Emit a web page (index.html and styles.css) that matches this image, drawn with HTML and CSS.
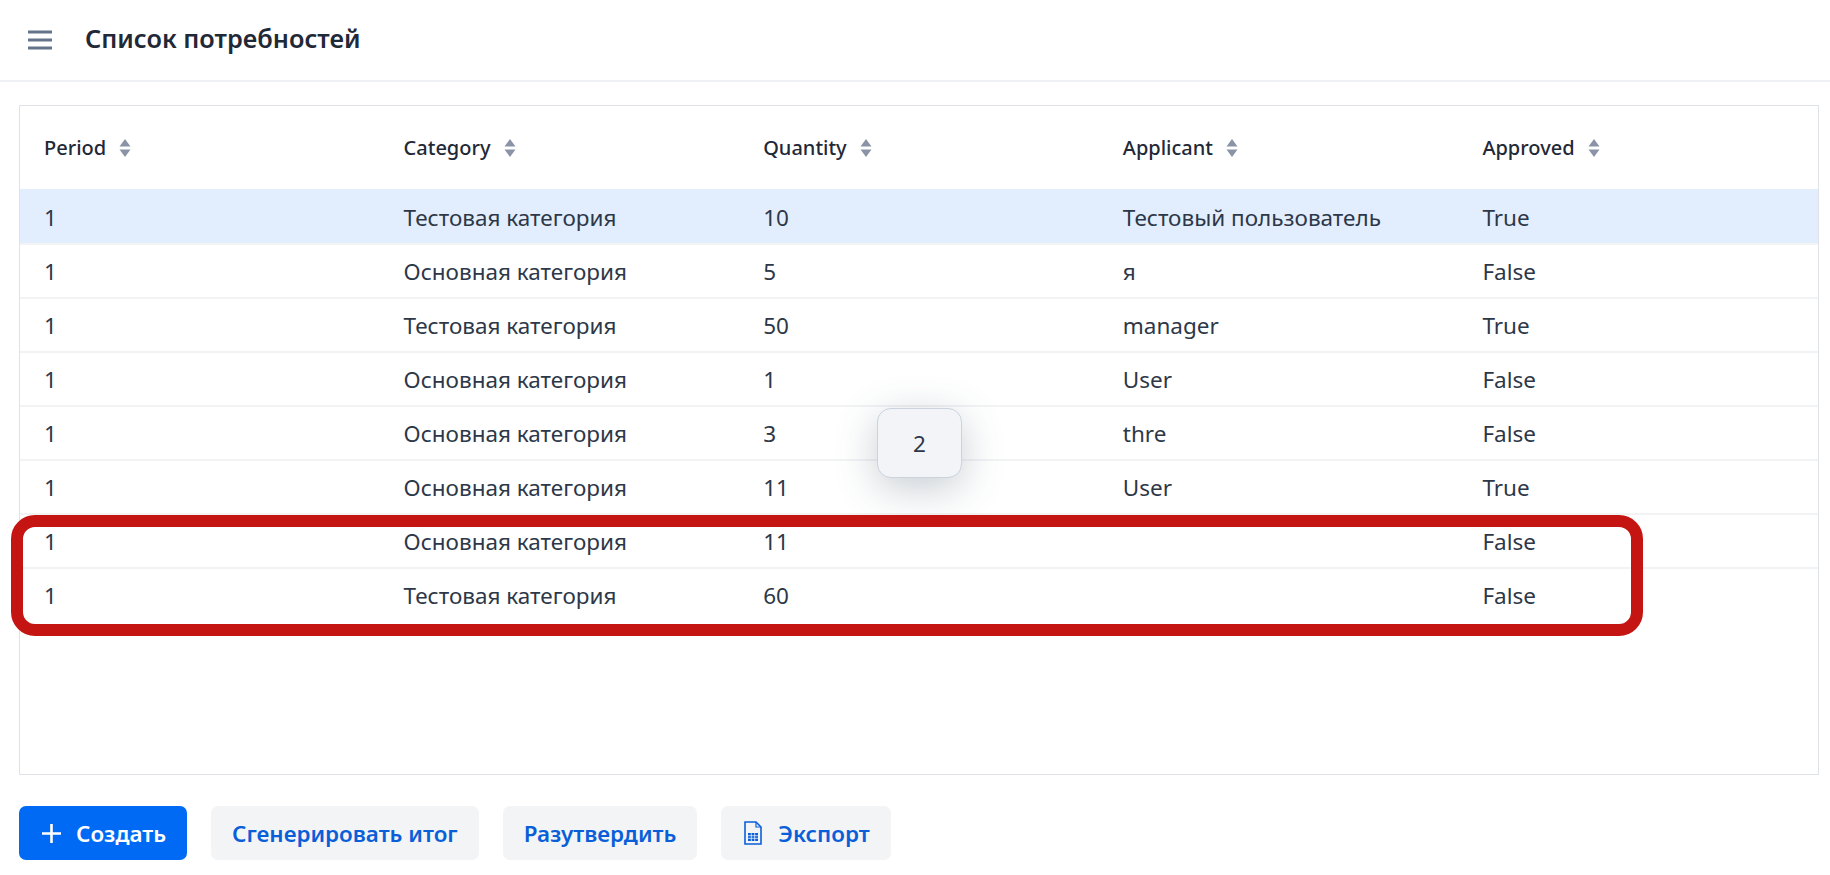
FILE: index.html
```html
<!doctype html>
<html lang="ru">
<head>
	<meta charset="UTF-8">
	<title>Список потребностей</title>
	<link rel="stylesheet" href="styles.css">
</head>
<body>
<div class="header">
	<svg class="menu-icon" viewBox="0 0 24 20" width="24" height="20"><path d="M0 2h24M0 10h24M0 18h24" stroke="#64748b" stroke-width="3" fill="none"/></svg>
	<h1 class="title">Список потребностей</h1>
</div>
<div class="content">
	<div class="table-box">
		<table class="grid">
			<thead>
				<tr>
					<th><span class="th-in">Period<svg class="sort" viewBox="0 0 12 18" width="12" height="18"><path d="M6 0l5.500 7.500H.5zM6 18L.5 10.500h11z"/></svg></span></th>
					<th><span class="th-in">Category<svg class="sort" viewBox="0 0 12 18" width="12" height="18"><path d="M6 0l5.500 7.500H.5zM6 18L.5 10.500h11z"/></svg></span></th>
					<th><span class="th-in">Quantity<svg class="sort" viewBox="0 0 12 18" width="12" height="18"><path d="M6 0l5.500 7.500H.5zM6 18L.5 10.500h11z"/></svg></span></th>
					<th><span class="th-in">Applicant<svg class="sort" viewBox="0 0 12 18" width="12" height="18"><path d="M6 0l5.500 7.500H.5zM6 18L.5 10.500h11z"/></svg></span></th>
					<th><span class="th-in">Approved<svg class="sort" viewBox="0 0 12 18" width="12" height="18"><path d="M6 0l5.500 7.500H.5zM6 18L.5 10.500h11z"/></svg></span></th>
				</tr>
			</thead>
			<tbody>
				<tr class="active"><td>1</td><td>Тестовая категория</td><td>10</td><td>Тестовый пользователь</td><td>True</td></tr>
				<tr><td>1</td><td>Основная категория</td><td>5</td><td>я</td><td>False</td></tr>
				<tr><td>1</td><td>Тестовая категория</td><td>50</td><td>manager</td><td>True</td></tr>
				<tr><td>1</td><td>Основная категория</td><td>1</td><td>User</td><td>False</td></tr>
				<tr><td>1</td><td>Основная категория</td><td>3</td><td>thre</td><td>False</td></tr>
				<tr><td>1</td><td>Основная категория</td><td>11</td><td>User</td><td>True</td></tr>
				<tr><td>1</td><td>Основная категория</td><td>11</td><td></td><td>False</td></tr>
				<tr><td>1</td><td>Тестовая категория</td><td>60</td><td></td><td>False</td></tr>
			</tbody>
		</table>
	</div>
	<div class="toolbar">
		<button class="btn btn-icon"><svg viewBox="0 0 19 19" width="19" height="19"><path d="M9.500 0v19M0 9.500h19" stroke="#fff" stroke-width="2.600" fill="none"/></svg>Создать</button>
		<button class="btn">Сгенерировать итог</button>
		<button class="btn">Разутвердить</button>
		<button class="btn btn-export"><svg viewBox="0 0 18 24" width="18" height="24"><path d="M1 1h11l5 5v17H1z" fill="none" stroke="#0a5fd8" stroke-width="1.600"/><path d="M12 1v5h5" fill="none" stroke="#0a5fd8" stroke-width="1.200"/><path d="M4 12h10v8H4z" fill="#0a5fd8"/><path d="M4 14.700h10M4 17.300h10M7.300 12v8M10.700 12v8" stroke="#fff" stroke-width=".7"/></svg>Экспорт</button>
	</div>
</div>
<div class="drag-chip">2</div>
<div class="mark"></div>
</body>
</html>
```

FILE: styles.css
```css
html,body{margin:0;padding:0;height:875px;overflow:hidden;}
body{
	background:#fff;
	color:#1f2937;
	font-family:"Noto Sans","Open Sans","Liberation Sans",sans-serif;
	font-size:22.5px;
	position:relative;
}
.header{
	height:80px;
	display:flex;
	align-items:center;
	padding-left:28px;
	gap:33px;
	border-bottom:2px solid #eef0f3;
}
.menu-icon{flex:none;}
.title{margin:-5px 0 0;font-size:25.300px;font-weight:600;color:#1f2937;}

.content{padding:23px 11px 0 19px;}
.table-box{
	height:668px;
	border:1px solid #dfe3e8;
}
.grid{width:100%;border-collapse:collapse;table-layout:fixed;}
.grid th{
	height:83px;
	padding:0 0 0 24px;
	text-align:left;
	font-size:20px;
	font-weight:500;
}
.th-in{display:flex;align-items:center;gap:13px;}
.sort{fill:#8a94a6;flex:none;}
.grid td{
	height:52px;
	padding:0 0 0 24px;
	border-top:2px solid #f2f3f5;
	color:#2d3748;
	white-space:nowrap;
}
.grid .active td{background:#e2eefd;border-top-color:#e2eefd;}

.toolbar{display:flex;gap:24px;margin-top:31px;}
.btn{
	height:54px;
	padding:0 21px;
	display:flex;
	align-items:center;
	gap:16px;
	border:0;
	border-radius:7px;
	background:#f3f4f6;
	color:#0a5fd8;
	font:600 22.400px "Noto Sans","Open Sans","Liberation Sans",sans-serif;
}
.btn-icon{padding-left:23px;gap:15px;background:#006af5;color:#fff;}
.btn-export{padding-left:23px;gap:16px;}

.drag-chip{
	position:absolute;
	left:877px;
	top:408px;
	width:85px;
	height:70px;
	box-sizing:border-box;
	display:flex;
	align-items:center;
	justify-content:center;
	background:#f3f4f7;
	border:1px solid #cbd3df;
	border-radius:14px;
	box-shadow:0 10px 40px rgba(71,85,105,.3);
	color:#2d3748;
}
.mark{
	position:absolute;
	left:11px;
	top:515px;
	width:1632px;
	height:121px;
	box-sizing:border-box;
	border:12px solid #c41513;
	border-radius:24px;
}
```
